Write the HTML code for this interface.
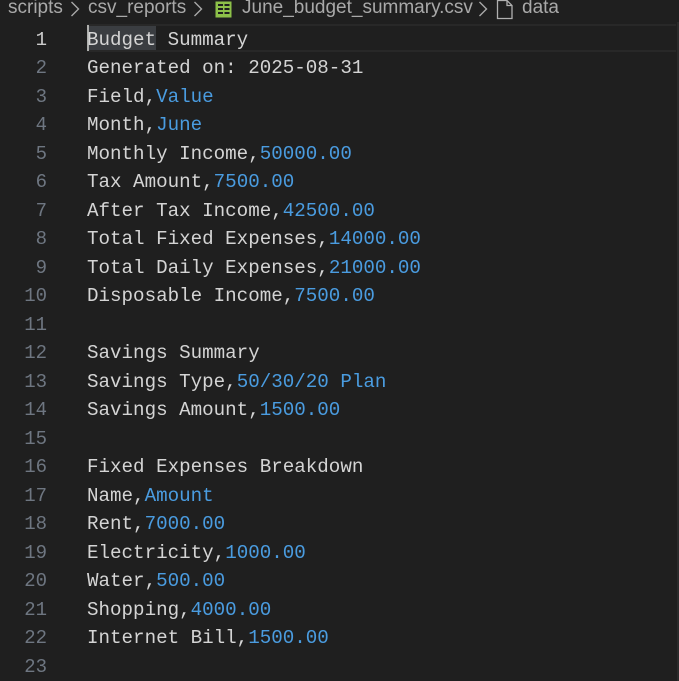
<!DOCTYPE html>
<html><head><style>
html,body{margin:0;padding:0;background:#1f1f1f;width:679px;height:681px;overflow:hidden;position:relative}
.bc{position:absolute;left:0;top:0;height:22px;font:19px "Liberation Sans",sans-serif;color:#a9a9a9;white-space:nowrap}
.bc > *{position:absolute;top:-3px}
.cur{position:absolute;left:87px;right:3px;top:24px;height:28px;border-top:2px solid #282828;border-bottom:2px solid #282828;box-sizing:border-box}
.sel{position:absolute;left:87px;top:26px;width:69px;height:24px;background:#3a3d41}
.caret{position:absolute;left:87px;top:25px;width:2px;height:26px;background:#aeafad}
.ln{position:absolute;left:0;width:47px;text-align:right;font:19px "Liberation Mono",monospace;color:#6e7681;line-height:28.5px}
.code{position:absolute;left:87px;font:19.2px "Liberation Mono",monospace;color:#d4d4d4;line-height:28.5px;white-space:pre}
.n{color:#4a9ce0}
.row{height:28.5px}
.rule{position:absolute;right:0;top:22px;width:2px;height:659px;background:#2b2b2b}
</style></head><body>
<div class="bc">
<span style="left:8px">scripts</span>
<svg style="left:70px;top:0px" width="10" height="18"><path d="M1.5 2l7 7-7 7" fill="none" stroke="#a9a9a9" stroke-width="1.4"/></svg>
<span style="left:88px">csv_reports</span>
<svg style="left:193px;top:0px" width="10" height="18"><path d="M1.5 2l7 7-7 7" fill="none" stroke="#a9a9a9" stroke-width="1.4"/></svg>
<svg style="left:215px;top:1px" width="17" height="17"><rect x="0.5" y="0.5" width="16" height="16" fill="#8dc149"/><g fill="#1f1f1f"><rect x="3" y="3" width="5" height="2"/><rect x="9.5" y="3" width="5" height="2"/><rect x="3" y="7" width="5" height="2"/><rect x="9.5" y="7" width="5" height="2"/><rect x="3" y="11" width="5" height="2"/><rect x="9.5" y="11" width="5" height="2"/></g></svg>
<span style="left:242px">June_budget_summary.csv</span>
<svg style="left:478px;top:0px" width="10" height="18"><path d="M1.5 2l7 7-7 7" fill="none" stroke="#a9a9a9" stroke-width="1.4"/></svg>
<svg style="left:496px;top:-1px" width="18" height="21"><path d="M1.5 1.5h9.5l5 5v13H1.5z M11 1.5v5h5" fill="none" stroke="#b0b0b0" stroke-width="1.3"/></svg>
<span style="left:522px">data</span>
</div>
<div class="cur"></div><div class="sel"></div><div class="caret"></div>
<div class="ln" style="top:25.5px">
<div class="row" style="color:#ccc">1</div><div class="row">2</div><div class="row">3</div><div class="row">4</div><div class="row">5</div><div class="row">6</div><div class="row">7</div><div class="row">8</div><div class="row">9</div><div class="row">10</div><div class="row">11</div><div class="row">12</div><div class="row">13</div><div class="row">14</div><div class="row">15</div><div class="row">16</div><div class="row">17</div><div class="row">18</div><div class="row">19</div><div class="row">20</div><div class="row">21</div><div class="row">22</div><div class="row">23</div>
</div>
<div class="code" style="top:25.5px">Budget Summary
Generated on: 2025-08-31
Field,<span class="n">Value</span>
Month,<span class="n">June</span>
Monthly Income,<span class="n">50000.00</span>
Tax Amount,<span class="n">7500.00</span>
After Tax Income,<span class="n">42500.00</span>
Total Fixed Expenses,<span class="n">14000.00</span>
Total Daily Expenses,<span class="n">21000.00</span>
Disposable Income,<span class="n">7500.00</span>

Savings Summary
Savings Type,<span class="n">50/30/20 Plan</span>
Savings Amount,<span class="n">1500.00</span>

Fixed Expenses Breakdown
Name,<span class="n">Amount</span>
Rent,<span class="n">7000.00</span>
Electricity,<span class="n">1000.00</span>
Water,<span class="n">500.00</span>
Shopping,<span class="n">4000.00</span>
Internet Bill,<span class="n">1500.00</span>
</div>
<div class="rule"></div>
</body></html>
